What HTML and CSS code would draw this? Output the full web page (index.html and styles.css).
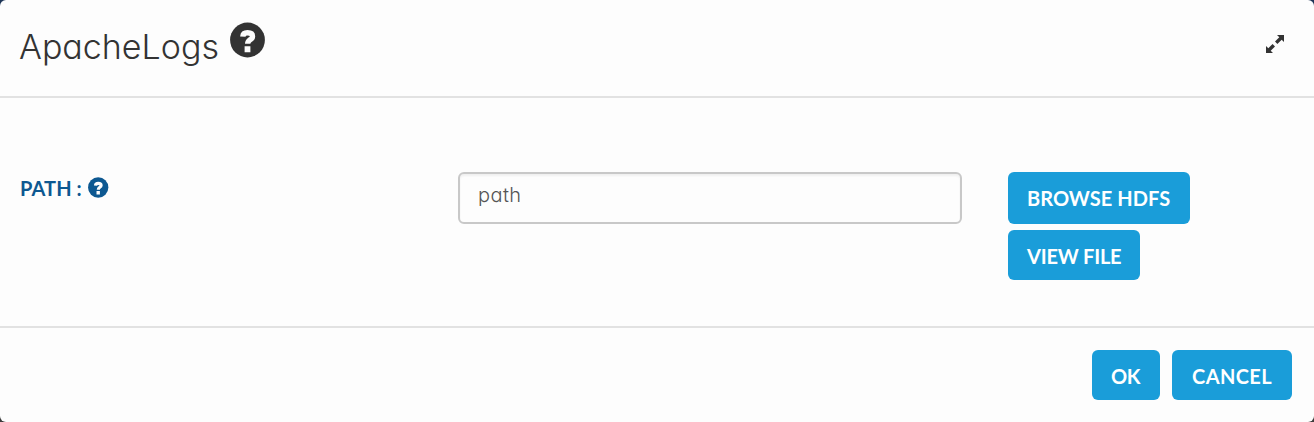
FILE: index.html
```html
<!DOCTYPE html>
<html lang="en">
<head>
<meta charset="utf-8">
<title>ApacheLogs</title>
<link rel="stylesheet" href="styles.css">
</head>
<body>
<svg width="0" height="0" class="defs">
  <symbol id="help" viewBox="0 0 36 36">
    <circle cx="17.500" cy="18" r="17.400" fill="currentColor"/>
    <path d="M12.800 14.600c.2-2.600 2-3.800 4.700-3.800 3.100 0 5 1.300 5 3.600 0 1.900-1.200 2.600-2.700 3.500-1.500 1-2.100 1.700-2.100 3.900" fill="none" stroke="#fdfdfd" stroke-width="5.400"/>
    <path d="M14.600 24.200h5.800v6h-5.800z" fill="#fdfdfd"/>
  </symbol>
</svg>
<main class="dialog">
  <header class="header">
    <h1 class="title">ApacheLogs</h1>
    <svg class="help-large"><use href="#help"/></svg>
    <svg class="expand" viewBox="0 0 20 20"><path d="M12 1h7v7l-2.300-2.300-4.300 4.300-2.400-2.400 4.300-4.300zM1 12l2.300 2.300L7.600 10 10 12.400l-4.300 4.300L8 19H1z" fill="#333"/></svg>
  </header>
  <section class="content">
    <label class="label" for="path"><span class="label-text">PATH :</span><svg class="help-small"><use href="#help"/></svg></label>
    <input class="field" id="path" type="text" value="path">
    <div class="actions">
      <button class="button browse">BROWSE HDFS</button>
      <button class="button view">VIEW FILE</button>
    </div>
  </section>
  <footer class="footer">
    <button class="button ok">OK</button>
    <button class="button cancel">CANCEL</button>
  </footer>
</main>
</body>
</html>
```

FILE: styles.css
```css
* { box-sizing: border-box; }
body { margin: 0; background: linear-gradient(#1d3557 50%, #3c3c3c 50%); font-family: Lato, sans-serif; }
.defs { display: block; position: absolute; }
.dialog { width: 1314px; height: 422px; background: #fdfdfd; border-radius: 6px; overflow: hidden; }
.header { display: flex; height: 98px; padding: 0 29px 0 20px; border-bottom: 2px solid #e2e2e2; }
.title { margin: 25px 0 0 -1px; width: 211px; font: 300 34px/44px Inter, sans-serif; font-feature-settings: "cv11"; letter-spacing: 0; color: #333; white-space: nowrap; }
.help-large { width: 36px; height: 36px; margin-top: 22px; color: #333; }
.expand { width: 20px; height: 20px; margin: 34px 0 0 auto; }
.content { display: flex; height: 230px; padding: 74px 20px 0; border-bottom: 2px solid #e2e2e2; }
.label { display: flex; width: 438px; color: #0d5891; }
.label-text { width: 67.5px; margin-top: 4px; font-size: 20px; font-weight: 700; line-height: 24px; letter-spacing: 0.1px; white-space: nowrap; }
.help-small { width: 21px; height: 21px; margin-top: 5px; }
.field { width: 504px; height: 52px; padding: 0 18px 6px; border: 2px solid #c8c8c8; border-radius: 6px; background: #fdfdfd; box-shadow: inset 0 2px 2px #f0f0f0; color: #555; font: 300 20px/24px Inter, sans-serif; font-feature-settings: "cv11"; letter-spacing: 0.4px; outline: 0; }
.actions { display: flex; flex-direction: column; align-items: flex-start; gap: 6px; margin-left: 46px; }
.button { height: 50px; padding: 1px 0 0; border: 0; border-radius: 6px; background: #1a9dd9; color: #fff; font: 700 20px/24px Lato, sans-serif; white-space: nowrap; text-align: left; }
.browse { width: 182px; height: 52px; padding: 0 0 1px 19px; letter-spacing: 0.05px; }
.view { width: 132px; padding-left: 19px; letter-spacing: -0.2px; }
.footer { display: flex; justify-content: flex-end; gap: 12px; padding: 22px 22px 0 0; }
.ok { width: 68px; padding-left: 19px; letter-spacing: -0.3px; }
.cancel { width: 120px; padding-left: 20px; letter-spacing: 0.4px; }
```
